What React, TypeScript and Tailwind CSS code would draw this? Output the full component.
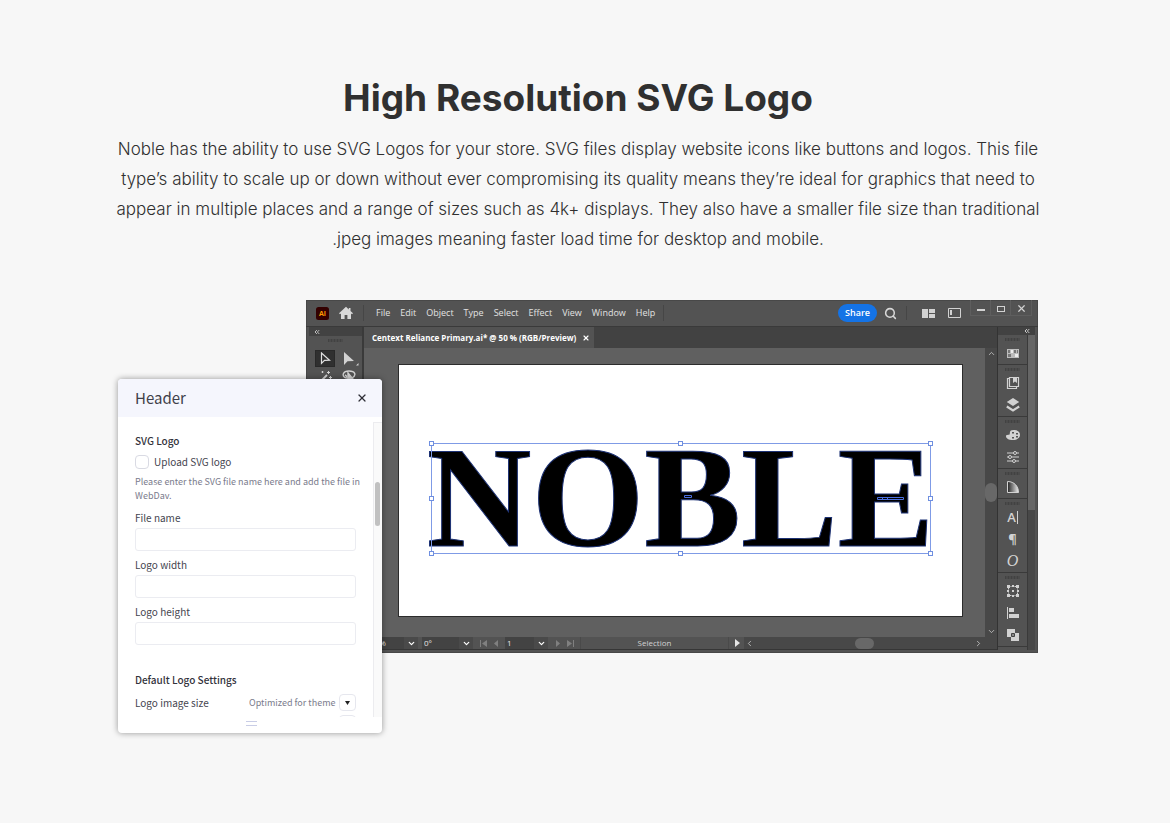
import React from "react";
import { ChevronDown, ChevronsLeft, ChevronLeft, ChevronRight, ChevronUp, Search, X } from "lucide-react";

const menuItems = ["File", "Edit", "Object", "Type", "Select", "Effect", "View", "Window", "Help"];

function Grip() {
  return (
    <div className="flex h-2 items-center justify-center">
      <svg width="15" height="3" viewBox="0 0 15 3" aria-hidden="true">
        <rect width="15" height="3" fill="#4b4b4b" />
        <path d="M.5 0v3M3.5 0v3M6.5 0v3M9.5 0v3M12.5 0v3" stroke="#424242" />
      </svg>
    </div>
  );
}

function DockIcon({ label, children }: { label: string; children: React.ReactNode }) {
  return (
    <button type="button" aria-label={label} className="flex h-[22px] w-full items-center justify-center text-[#d2d2d2]">
      <svg width="14" height="14" viewBox="0 0 14 14" fill="none" stroke="none" aria-hidden="true">
        {children}
      </svg>
    </button>
  );
}

function DockGlyph({ label, children }: { label: string; children: React.ReactNode }) {
  return (
    <button type="button" aria-label={label} className="flex h-[22px] w-full items-center justify-center text-[#d2d2d2]">
      {children}
    </button>
  );
}

function DockGroup({ children }: { children: React.ReactNode }) {
  return (
    <div className="shrink-0 border-b border-[#3a3a3a]">
      <Grip />
      <div className="-mt-px">{children}</div>
    </div>
  );
}

function TitleBar() {
  return (
    <div className="flex h-[26px] items-center pl-2.5 pr-1.5">
      <svg width="13" height="13" viewBox="0 0 13 13" aria-hidden="true">
        <rect width="13" height="13" rx="2.5" fill="#330000" />
        <text x="6.5" y="9" textAnchor="middle" fontFamily="Open Sans, sans-serif" fontWeight="700" fontSize="7" fill="#ff9a00">
          Ai
        </text>
      </svg>
      <button type="button" aria-label="Home" className="ml-2.5">
        <svg width="14" height="14" viewBox="0 0 14 14" aria-hidden="true">
          <path d="M7 .8 0 7.3l1 1 1-.9V13h3.6V9h2.8v4H12V7.4l1 .9 1-1-2.5-2.3V2h-1.7v1.4z" fill="#d8d8d8" />
        </svg>
      </button>
      <nav className="ml-2.5 flex h-4 items-center gap-2.5 border-x border-[#464646] pl-3 pr-2 text-[9px] text-[#e2e2e2]">
        {menuItems.map((item) => (
          <button type="button" key={item}>
            {item}
          </button>
        ))}
      </nav>
      <div className="ml-auto flex h-full items-center">
        <button type="button" className="h-[18px] rounded-full bg-[#1473e6] px-[7px] text-[9px] font-semibold text-white">
          Share
        </button>
        <button type="button" aria-label="Search" className="ml-[7px] text-[#d8d8d8]">
          <Search size={13} strokeWidth={2.8} />
        </button>
        <div className="ml-[9px] h-3.5 w-px bg-[#464646]" />
        <button type="button" aria-label="Arrange documents" className="ml-[15px]">
          <svg width="13" height="9" viewBox="0 0 13 9" fill="#d2d2d2" aria-hidden="true">
            <path d="M0 0h6v9H0zM7 0h6v4H7zM7 5h6v4H7z" />
          </svg>
        </button>
        <button type="button" aria-label="Workspace" className="ml-[13px]">
          <svg width="13" height="10" viewBox="0 0 13 10" fill="none" aria-hidden="true">
            <path d="M.5.5h12v9H.5z" stroke="#d2d2d2" />
            <path d="M2 2h2v5H2z" fill="#d2d2d2" />
          </svg>
        </button>
        <div className="ml-[9px] flex h-4 self-start border border-t-0 border-[#5e5e5e]">
          <button type="button" aria-label="Minimize" className="flex w-5 items-center justify-center border-r border-[#5e5e5e] pt-1">
            <span className="h-0.5 w-2 bg-[#d2d2d2]" />
          </button>
          <button type="button" aria-label="Maximize" className="flex w-5 items-center justify-center border-r border-[#5e5e5e] pt-0.5">
            <span className="h-1.5 w-2 border border-[#d2d2d2]" />
          </button>
          <button type="button" aria-label="Close window" className="flex w-5 items-center justify-center pt-0.5 text-[#d2d2d2]">
            <X size={11} strokeWidth={2.6} />
          </button>
        </div>
      </div>
    </div>
  );
}

function ToolColumn() {
  return (
    <div className="ml-[3px] w-[55px] shrink-0 border-r-2 border-[#3a3a3a]">
      <div className="flex h-[9px] items-center bg-[#424242] pl-1 text-[#c8c8c8]">
        <ChevronsLeft size={8} strokeWidth={2.8} />
      </div>
      <Grip />
      <div className="mt-1.5 grid grid-cols-[20px_20px] gap-x-1 px-1.5">
        <button type="button" aria-label="Selection tool" className="flex h-[17px] items-center justify-center border border-[#292929] bg-[#303030]">
          <svg width="11" height="13" viewBox="0 0 11 13" fill="none" aria-hidden="true">
            <path d="M1.5 1v10.4l3-3 5-.2z" stroke="#e0e0e0" strokeWidth="1.2" />
          </svg>
        </button>
        <button type="button" aria-label="Direct selection tool" className="flex h-[18px] items-center justify-end">
          <svg width="15" height="14" viewBox="0 0 15 14" fill="#d2d2d2" aria-hidden="true">
            <path d="M0 0v13l3.5-3.8 6.5-.2zM14.500 11v2.500H12z" />
          </svg>
        </button>
        <button type="button" aria-label="Magic wand tool" className="flex h-4 items-center justify-center">
          <svg width="13" height="13" viewBox="0 0 13 13" fill="none" stroke="#d2d2d2" aria-hidden="true">
            <path d="m1 12 7-7" strokeWidth="1.8" />
            <path d="M9.5 1v3M8 2.500h3M3.5 1v2M2.500 2h2M11.500 6v3M10 7.500h3" />
          </svg>
        </button>
        <button type="button" aria-label="Lasso tool" className="flex h-4 items-center justify-center">
          <svg width="14" height="13" viewBox="0 0 14 13" fill="none" stroke="#d2d2d2" strokeWidth="1.4" aria-hidden="true">
            <path d="M4 8C-1 6 1 1 7 1s8 4 3 7M3 5c2 1 3 3 1 7" />
            <path d="M6 3v8l2-2h3z" fill="#d2d2d2" />
          </svg>
        </button>
      </div>
    </div>
  );
}

function Handle({ x, y }: { x: number; y: number }) {
  return <rect x={x - 2} y={y - 2} width="4" height="4" fill="#fff" stroke="#6f8fe0" />;
}

function Artboard() {
  return (
    <div className="flex h-[253px] min-w-0 flex-1 items-center justify-center border border-[#2c2c2c] bg-white pt-3.5">
      <div className="relative flex h-[116px] w-[506px] shrink-0 items-center justify-center">
        <span className="whitespace-nowrap text-center font-['Liberation_Serif',serif] text-[145px] font-bold leading-none text-black [-webkit-text-stroke:1px_#1d3275]">
          NOBLE
        </span>
        <svg className="absolute inset-0" width="506" height="116" viewBox="0 0 506 116" fill="none" aria-hidden="true">
          <path d="M3.5 3.5h499v110h-499z" stroke="#7f9be6" />
          <Handle x={3.5} y={3.5} />
          <Handle x={252.5} y={3.5} />
          <Handle x={502.5} y={3.5} />
          <Handle x={3.5} y={58.5} />
          <Handle x={502.5} y={58.5} />
          <Handle x={3.5} y={113.5} />
          <Handle x={252.5} y={113.5} />
          <Handle x={502.5} y={113.5} />
          <path d="M256.5 55.5h7v2h-7zM449.5 57.5h26v2h-26zM454.5 57.5v2M459.5 57.5v2" stroke="#4a6fe0" />
        </svg>
      </div>
    </div>
  );
}

function StatusSelect({ label, value, className }: { label: string; value: string; className: string }) {
  return (
    <div className={className}>
      <select aria-label={label} defaultValue={value} className="h-full w-full appearance-none bg-[#434343] pl-[inherit] text-[8px] text-[#e6e6e6]">
        <option>{value}</option>
      </select>
      <span className="pointer-events-none absolute inset-y-0 right-0 flex w-3.5 items-center justify-center bg-[#4a4a4a] text-white">
        <ChevronDown size={9} strokeWidth={3.2} />
      </span>
    </div>
  );
}

function StatusBar() {
  return (
    <div className="flex h-[13px] items-center border-b border-[#363636] text-[8px] text-[#d2d2d2]">
      <StatusSelect label="Zoom" value="50%" className="relative h-full w-[54px] bg-[#434343] pl-[3px]" />
      <StatusSelect label="Rotation" value="0°" className="relative ml-1 h-full w-[51px] bg-[#434343] pl-px" />
      <button type="button" aria-label="First artboard" className="ml-[7px]">
        <svg width="7" height="7" viewBox="0 0 7 7" fill="#808080"><path d="M0 0h1v7H0zM7 0v7L2 3.5z" /></svg>
      </button>
      <button type="button" aria-label="Previous artboard" className="ml-[7px]">
        <svg width="4" height="7" viewBox="0 0 4 7" fill="#808080"><path d="M4 0v7L0 3.5z" /></svg>
      </button>
      <StatusSelect label="Artboard" value="1" className="relative ml-[7px] h-full w-[43px] bg-[#434343] pl-px" />
      <button type="button" aria-label="Next artboard" className="ml-2">
        <svg width="4" height="7" viewBox="0 0 4 7" fill="#808080"><path d="M0 0v7l4-3.5z" /></svg>
      </button>
      <button type="button" aria-label="Last artboard" className="ml-[7px]">
        <svg width="7" height="7" viewBox="0 0 7 7" fill="#808080"><path d="M0 0v7l5-3.5zM6 0h1v7H6z" /></svg>
      </button>
      <div className="ml-1.5 w-[149px] border-x border-[#4a4a4a] text-center leading-3">Selection</div>
      <button type="button" aria-label="Status menu" className="ml-1.5">
        <svg width="5" height="8" viewBox="0 0 5 8" fill="#e6e6e6"><path d="M0 0v8l5-4z" /></svg>
      </button>
      <div className="ml-1 flex h-full flex-1 items-center justify-between bg-[#484848] pl-px pr-3.5">
        <ChevronLeft size={9} strokeWidth={2} />
        <div className="h-[11px] w-[19px] rounded-full bg-[#686868]" />
        <ChevronRight size={9} strokeWidth={2} />
      </div>
    </div>
  );
}

function Dock() {
  return (
    <div className="mr-[3px] flex w-[38px] shrink-0 flex-col overflow-hidden border-l border-[#333]">
      <div className="flex h-2 shrink-0 items-center justify-end bg-[#424242] pr-1 text-[#d2d2d2]">
        <ChevronsLeft size={8} strokeWidth={2.8} />
      </div>
      <div className="flex min-h-0 flex-1">
        <div className="flex min-w-0 flex-1 flex-col overflow-hidden">
          <DockGroup>
            <DockIcon label="Swatches">
              <path d="M1 3h12v9H1z" fill="#bdbdbd" />
              <path d="M2 4h2v3H2zM8 4h2v3H8zM11 4h1v3h-1zM2 8h3v3H2z" fill="#777" />
              <path d="M5 4h2v3H5zM9 8h3v3H9z" fill="#eee" />
            </DockIcon>
          </DockGroup>
          <DockGroup>
            <DockIcon label="Libraries">
              <path d="M3.5 1.5h9v9h-9zM3.5 2.5h-2v10h9v-2" stroke="currentColor" strokeWidth="1.2" />
              <path d="M7 1h4v6L9 5.5 7 7z" fill="currentColor" />
            </DockIcon>
            <DockIcon label="Layers">
              <path d="M7 0 .8 4 7 8l6.2-4z" fill="currentColor" />
              <path d="M.8 8.5 7 12.5l6.2-4" stroke="currentColor" strokeWidth="2.2" />
            </DockIcon>
          </DockGroup>
          <DockGroup>
            <DockIcon label="Color">
              <path fillRule="evenodd" d="M7.5 2C12 2 14 4 14 7s-3 5-7 5c-4.500 0-7-1.500-7-4 0-1.600 2.500-.8 3.500-1.500S2.500 2 7.500 2zM6 4v1.500h2V4zm4 1v1.500h2V5zm0 3v1.500h2V8zM6 9v1.500h2V9z" fill="currentColor" />
            </DockIcon>
            <DockIcon label="Properties">
              <path d="M1 3h12M1 7h12M1 11h12" stroke="currentColor" />
              <circle cx="9" cy="3" r="1.5" fill="#535353" stroke="currentColor" />
              <circle cx="4" cy="7" r="1.5" fill="#535353" stroke="currentColor" />
              <circle cx="8" cy="11" r="1.5" fill="#535353" stroke="currentColor" />
            </DockIcon>
          </DockGroup>
          <DockGroup>
            <DockIcon label="Gradient">
              <defs>
                <linearGradient id="fan" x1="0" x2="1">
                  <stop stopColor="#222" />
                  <stop offset="1" stopColor="#eee" />
                </linearGradient>
              </defs>
              <path d="M1.5 1.5v11h11c0-6-4-11-11-11z" fill="url(#fan)" stroke="#d2d2d2" />
            </DockIcon>
          </DockGroup>
          <DockGroup>
            <DockGlyph label="Character">
              <span className="border-r border-current pr-px font-['Open_Sans',sans-serif] text-[13px] font-semibold leading-[13px]">A</span>
            </DockGlyph>
            <DockGlyph label="Paragraph">
              <span className="font-['Open_Sans',sans-serif] text-[13px] font-bold leading-none">¶</span>
            </DockGlyph>
            <DockGlyph label="OpenType">
              <span className="font-['Liberation_Serif',serif] text-[16px] italic leading-none">O</span>
            </DockGlyph>
          </DockGroup>
          <DockGroup>
            <DockIcon label="Transform">
              <path d="M2.5 2.5h9v9h-9z" stroke="currentColor" strokeDasharray="2 1" />
              <path d="M1 1h3v3H1zM10 1h3v3h-3zM1 10h3v3H1zM10 10h3v3h-3zM6 1h2v2H6zM6 11h2v2H6zM1 6h2v2H1zM11 6h2v2h-2zM6 6h2v2H6z" fill="currentColor" />
            </DockIcon>
            <DockIcon label="Align">
              <path d="M1 1h1v12H1zM3 2h5v4H3zM3 8h10v4H3z" fill="currentColor" />
            </DockIcon>
            <DockIcon label="Pathfinder">
              <path d="M1 1h8v8H1z" fill="currentColor" />
              <path d="M5 5h8v8H5z" fill="currentColor" />
              <path d="M5.5 5.5h3v3h-3z" fill="#888" stroke="#444" />
            </DockIcon>
          </DockGroup>
        </div>
        <div className="w-2 shrink-0 border-l border-[#3a3a3a] bg-[#484848]">
          <div className="h-[175px] bg-[#666]" />
        </div>
      </div>
    </div>
  );
}

function EditorWindow() {
  return (
    <div className="flex h-[353px] flex-col bg-[#535353] pb-[3px] font-['Open_Sans',sans-serif] ring-1 ring-inset ring-[#484848]">
      <TitleBar />
      <div className="flex min-h-0 flex-1 border-t border-[#3a3a3a]">
        <ToolColumn />
        <div className="flex min-w-0 flex-1 flex-col">
          <div className="flex h-[21px] bg-[#424242]">
            <div className="flex w-[230px] items-center justify-between bg-[#535353] pl-2 pr-1 text-[8px] font-bold text-white">
              <span className="whitespace-nowrap">Centext Reliance Primary.ai* @ 50 % (RGB/Preview)</span>
              <button type="button" aria-label="Close document">
                <X size={8} strokeWidth={3.5} />
              </button>
            </div>
          </div>
          <div className="flex min-h-0 flex-1">
            <div className="flex min-w-0 flex-1 bg-[#606060] pl-[34px] pr-[22px] pt-4">
              <Artboard />
            </div>
            <div className="flex w-3 flex-col items-center justify-between bg-[#484848] py-px text-[#d2d2d2]">
              <ChevronUp size={9} strokeWidth={2} />
              <div className="h-[19px] w-3 rounded-full bg-[#686868]" />
              <ChevronDown size={9} strokeWidth={2} />
            </div>
          </div>
          <StatusBar />
        </div>
        <Dock />
      </div>
    </div>
  );
}

function TextField({ id, label }: { id: string; label: string }) {
  return (
    <div className="mb-[7px]">
      <label htmlFor={id} className="block h-[17px] leading-[14px]">
        {label}
      </label>
      <input id={id} type="text" className="block h-[23px] w-full rounded-[3px] border border-[#ebecf1] bg-white px-1.5" />
    </div>
  );
}

function SettingsPanel() {
  return (
    <section className="absolute left-0 top-[79px] flex h-[354px] w-[264px] flex-col overflow-hidden rounded bg-white font-['Noto_Sans_CJK_SC',sans-serif] text-[10px] text-[#45454f] shadow-[0_0_6px_rgba(0,0,0,0.4)]">
      <header className="flex h-[38px] shrink-0 items-center justify-between bg-[#f5f6fd] pl-[17px] pr-3.5">
        <h2 className="text-[15px] leading-5 text-[#3f3f49]">Header</h2>
        <button type="button" aria-label="Close panel" className="text-[#2e2e36]">
          <X size={12} strokeWidth={2.4} />
        </button>
      </header>
      <div className="mt-[5px] flex h-[295px] overflow-hidden">
        <div className="min-w-0 flex-1 pl-[17px] pr-[17px] pt-[11px]">
          <h3 className="leading-4 font-medium text-[#33333c]">SVG Logo</h3>
          <div className="mt-1.5 flex h-3.5 items-center gap-[5px]">
            <input id="upload" type="checkbox" className="size-3.5 appearance-none rounded-sm border border-[#d9dae3] bg-white" />
            <label htmlFor="upload" className="leading-3">Upload SVG logo</label>
          </div>
          <p className="mb-2 mt-1.5 whitespace-nowrap text-[9px] leading-3.5 text-[#7a7b8c]">
            Please enter the SVG file name here and add the file in
            <br />
            WebDav.
          </p>
          <TextField id="file-name" label="File name" />
          <TextField id="logo-width" label="Logo width" />
          <TextField id="logo-height" label="Logo height" />
          <h3 className="mt-[27px] leading-4 font-medium text-[#33333c]">Default Logo Settings</h3>
          <div className="mt-1.5 flex h-[17px] items-center">
            <label htmlFor="image-size">Logo image size</label>
            <div className="relative ml-auto">
              <select id="image-size" className="block h-[17px] w-[107px] appearance-none bg-transparent text-[9px] text-[#7a7b8c]">
                <option>Optimized for theme</option>
              </select>
              <span className="pointer-events-none absolute inset-y-0 right-0 flex w-[17px] items-center justify-center rounded-sm border border-[#e6e7ee] bg-white">
                <svg width="5" height="4" viewBox="0 0 5 4" fill="#222" aria-hidden="true">
                  <path d="M0 0h5L2.5 4z" />
                </svg>
              </span>
            </div>
          </div>
          <div className="ml-auto mt-1 h-[17px] w-[17px] rounded-sm border border-[#e6e7ee]" />
        </div>
        <div className="w-[9px] shrink-0 border-l border-t border-[#ececef] bg-[#fafafa] pl-px pt-[59px]">
          <div className="h-11 w-[5px] rounded-full bg-[#c1c1c1]" />
        </div>
      </div>
      <div className="flex flex-1 justify-center pt-1">
        <div className="mr-[-3px] h-[5px] w-[11px] border-y border-[#c9cde6]" />
      </div>
    </section>
  );
}

export default function App() {
  return (
    <main className="min-h-screen bg-[#f7f7f7] pb-[90px] pl-4 pr-[30px] pt-[78px]">
      <div className="mx-auto max-w-[960px] text-center font-['Inter',sans-serif] text-[#303030]">
        <h1 className="text-[37px] font-bold leading-10">High Resolution SVG Logo</h1>
        <p className="mt-4 text-[17px] font-light leading-[30px]">
          Noble has the ability to use SVG Logos for your store. SVG files display website icons like buttons and logos. This file
          <br />
          type’s ability to scale up or down without ever compromising its quality means they’re ideal for graphics that need to
          <br />
          appear in multiple places and a range of sizes such as 4k+ displays. They also have a smaller file size than traditional
          <br />
          .jpeg images meaning faster load time for desktop and mobile.
        </p>
      </div>
      <div className="relative mx-auto mt-[46px] w-full max-w-[920px] pl-[188px]">
        <EditorWindow />
        <SettingsPanel />
      </div>
    </main>
  );
}
